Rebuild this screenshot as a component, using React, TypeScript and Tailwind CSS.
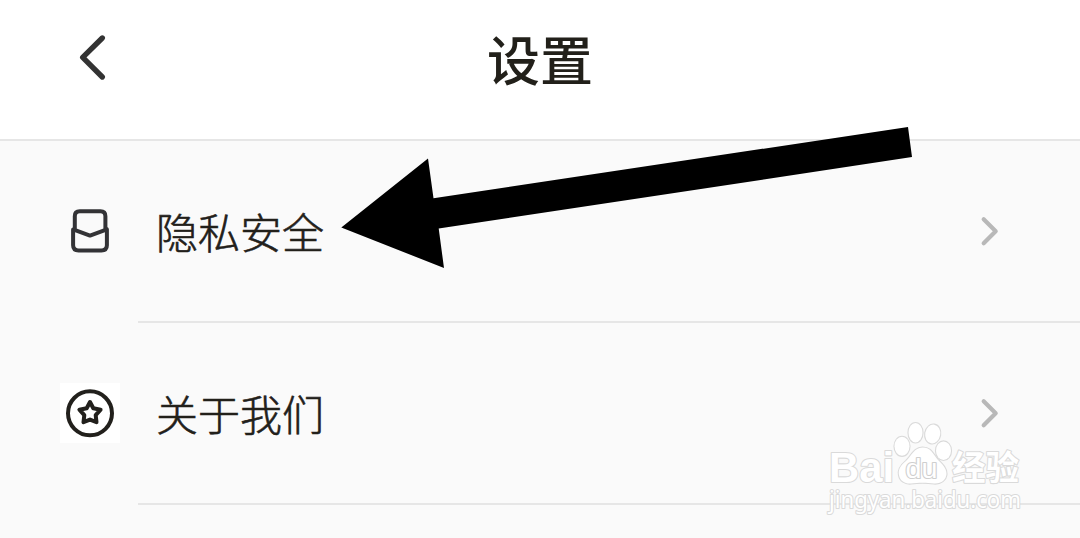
import type { ReactNode } from 'react'

function BackIcon() {
  return (
    <svg className="h-12 w-8" viewBox="0 0 32 48" fill="none" stroke="#333333" strokeWidth="5.4" strokeLinecap="round" strokeLinejoin="round">
      <path d="M25.3 5 L5.7 24.4 L25.3 44" />
    </svg>
  )
}

function ChevronIcon() {
  return (
    <svg className="h-8 w-5" viewBox="0 0 20 32" fill="none" stroke="#b8b8b8" strokeWidth="4.2" strokeLinecap="round" strokeLinejoin="round">
      <path d="M3.7 4.3 L15.7 16.3 L3.7 28.3" />
    </svg>
  )
}

function PrivacyIcon() {
  return (
    <svg className="size-[60px]" viewBox="0 0 60 60" fill="none" stroke="#333336" strokeWidth="4" strokeLinecap="round" strokeLinejoin="round">
      <path d="M14.8 27.5 V15.2 Q14.8 10.3 19.7 10.3 H40.5 Q45.4 10.3 45.4 15.2 V27.5" />
      <path d="M13.1 28.4 L30 34.6 L46.9 28.4 V44.3 Q46.9 49.4 41.4 49.4 H18.6 Q13.1 49.4 13.1 44.3 Z" />
    </svg>
  )
}

function AboutIcon() {
  return (
    <svg className="size-[60px] bg-white" viewBox="0 0 60 60" fill="none" stroke="#22201c" strokeWidth="4" strokeLinejoin="round">
      <circle cx="30" cy="30.3" r="22" />
      <path d="M30 19 L33.3 25.3 L40.6 26.7 L35.7 32.2 L36.5 39.2 L30 36.6 L23.5 39.2 L24.3 32.2 L19.4 26.7 L26.7 25.3 Z" />
    </svg>
  )
}

function Row({ icon, label }: { icon: ReactNode, label: string }) {
  return (
    <div className="flex h-[182px] pl-[60px]">
      <div className="flex w-[78px] shrink-0 items-center pb-0.5">{icon}</div>
      <div className="flex flex-1 items-center justify-between border-b-2 border-[#e6e6e6] pl-[18px] pr-[80px]">
        <span className="text-[42px] leading-[60px] font-light text-[#22201a] [-webkit-text-stroke:0.6px_#22201a]">{label}</span>
        <ChevronIcon />
      </div>
    </div>
  )
}

function Arrow() {
  return (
    <svg className="absolute left-[340px] top-[120px] h-[150px] w-[580px]" viewBox="340 120 580 150">
      <polygon points="341.3,227.5 428,158.5 433.5,198.2 908,127 912,157 438.7,228.6 444,268" fill="#000" />
    </svg>
  )
}

function Watermark() {
  return (
    <svg className="absolute left-[810px] top-[415px] h-[115px] w-[230px]" viewBox="810 415 230 115" fill="#fff" stroke="#dadada" strokeWidth="2.2" strokeLinejoin="round" paintOrder="stroke">
      <text x="829" y="481.5" fontSize="42.5" fontWeight="700" fontFamily="Liberation Sans, sans-serif" textLength="65" lengthAdjust="spacingAndGlyphs">Bai</text>
      <ellipse cx="902" cy="446.3" rx="7.5" ry="9.5" />
      <ellipse cx="915.5" cy="432.7" rx="7" ry="9.7" />
      <ellipse cx="932.7" cy="434" rx="7.5" ry="9.5" transform="rotate(10 932.7 434)" />
      <ellipse cx="943.5" cy="450.7" rx="7.5" ry="9.3" />
      <path d="M922.5 447.5 C914 447.5 911.5 456 906 461 C900 466 898 470 899 475 C900 481 905 484 911 483.5 C918 482.5 927 482.5 934 483.5 C941 484 946 480 946.5 474 C946.5 468 942 464 938 460 C933 454 931 447.5 922.5 447.5 Z" />
      <text x="905.5" y="477.5" fontSize="27" fontFamily="Liberation Sans, sans-serif" stroke="#cfcfcf" textLength="32" lengthAdjust="spacingAndGlyphs">du</text>
      <text x="952" y="480" fontSize="34" fontWeight="700" fontFamily="Noto Sans CJK SC, sans-serif" textLength="67" lengthAdjust="spacingAndGlyphs">经验</text>
      <text x="829" y="508" fontSize="23.5" fontFamily="Noto Sans, sans-serif" textLength="192" lengthAdjust="spacingAndGlyphs">jingyan.baidu.com</text>
    </svg>
  )
}

export default function App() {
  return (
    <div className="relative h-[538px] w-[1080px] overflow-hidden bg-[#fafafa] font-['Noto_Sans_CJK_SC',sans-serif]">
      <header className="grid h-[141px] grid-cols-3 border-b-2 border-[#e6e6e6] bg-white pt-5">
        <div className="pl-[77px] pt-[13px]">
          <BackIcon />
        </div>
        <h1 className="text-center text-[53px] leading-[76px] font-medium text-[#22201a]">设置</h1>
      </header>
      <Row icon={<PrivacyIcon />} label="隐私安全" />
      <Row icon={<AboutIcon />} label="关于我们" />
      <Arrow />
      <Watermark />
    </div>
  )
}
